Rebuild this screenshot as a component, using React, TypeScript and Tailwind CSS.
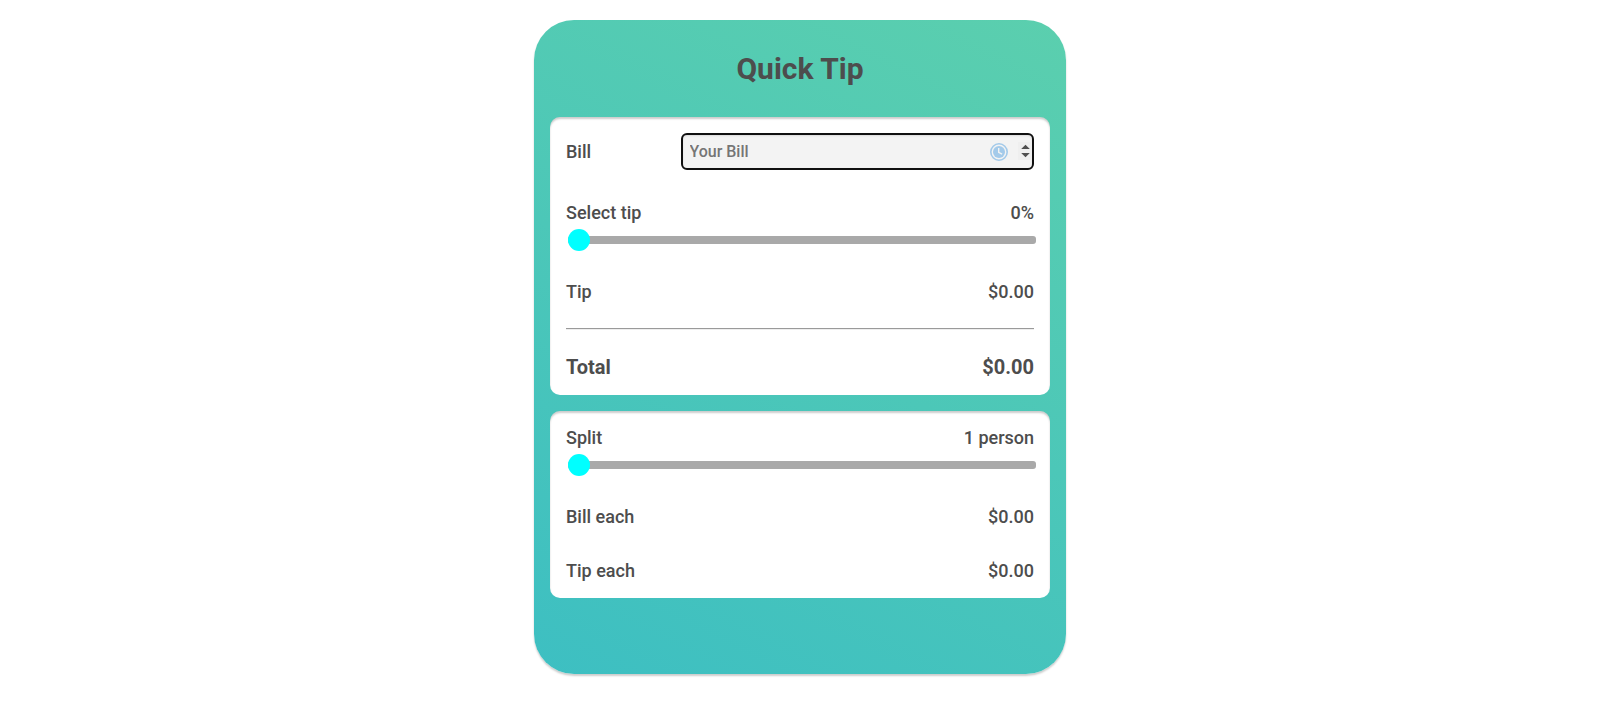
import { ReactNode } from "react";

function Row({ label, value, className = "" }: { label: string; value: ReactNode; className?: string }) {
  return (
    <div className={`flex justify-between ${className}`}>
      <span>{label}</span>
      <span>{value}</span>
    </div>
  );
}

function Slider({ label }: { label: string }) {
  return (
    <input
      type="range"
      aria-label={label}
      min={0}
      max={100}
      defaultValue={0}
      className="ml-[2px] mt-[13px] block h-2 w-[468px] appearance-none rounded-[3px] bg-[#a9a9a9] outline-none [&::-webkit-slider-thumb]:size-[22px] [&::-webkit-slider-thumb]:appearance-none [&::-webkit-slider-thumb]:rounded-full [&::-webkit-slider-thumb]:bg-[#00ffff]"
    />
  );
}

const panel =
  "rounded-[10px] bg-white px-4 shadow-[inset_0_2px_2px_rgba(0,0,0,0.2)]";

export default function App() {
  return (
    <main className="flex h-[707px] justify-center bg-white pt-5 font-['Roboto',sans-serif] text-lg/[21px] font-medium text-[#4d4d4d]">
      <div className="flex h-[654px] w-[532px] flex-col rounded-[40px] bg-[linear-gradient(26deg,#3dbfc2,#5bcfae)] px-4 shadow-[0_2px_2px_rgba(0,0,0,0.2)]">
        <h1 className="pt-[31px] text-center text-[30px]/[35px] font-bold">Quick Tip</h1>

        <section className={`${panel} mt-[31px] h-[278px] pt-4`}>
          <div className="flex h-[37px] items-center justify-between">
            <label htmlFor="bill">Bill</label>
            <div className="flex h-[37px] w-[353px] items-center rounded-[6px] border-2 border-[#101010] bg-[#f3f3f3] pl-[6.5px] shadow-[inset_0_1px_2px_rgba(0,0,0,0.1)]">
              <input
                id="bill"
                placeholder="Your Bill"
                className="h-[21px] min-w-0 flex-1 bg-transparent text-base/[21px] tracking-[-0.02px] outline-none placeholder:text-[#757575]"
              />
              <svg className="mr-[10px] mt-[1px] size-[18px]" viewBox="0 0 18 18" fill="none">
                <circle cx="9" cy="9" r="8.2" stroke="#a3caea" strokeWidth="1.6" />
                <circle cx="9" cy="9" r="6" fill="#a3caea" />
                <path d="M8.7 5v4.3l3.4 1.9" stroke="#f3f3f3" strokeWidth="1.4" />
              </svg>
              <svg className="-mt-[1px] h-[18px] w-[14px] bg-[#efefef]" viewBox="0 0 14 18" fill="#505050">
                <path d="M3.2 7.1 7.5 2.8l4.3 4.3zM3.2 11l4.3 4.3 4.3-4.3z" />
              </svg>
            </div>
          </div>
          <Row label="Select tip" value="0%" className="mt-8" />
          <Slider label="Select tip" />
          <Row label="Tip" value="$0.00" className="mt-[37px]" />
          <hr className="mt-[26px] h-[2px] border-b border-t border-b-[#eeeeee] border-t-[#9a9a9a]" />
          <Row label="Total" value="$0.00" className="mt-[26px] text-xl/[23px] font-bold" />
        </section>

        <section className={`${panel} mt-4 h-[187px] pt-4`}>
          <Row label="Split" value="1 person" />
          <Slider label="Split" />
          <Row label="Bill each" value="$0.00" className="mt-[37px]" />
          <Row label="Tip each" value="$0.00" className="mt-[33px]" />
        </section>
      </div>
    </main>
  );
}
